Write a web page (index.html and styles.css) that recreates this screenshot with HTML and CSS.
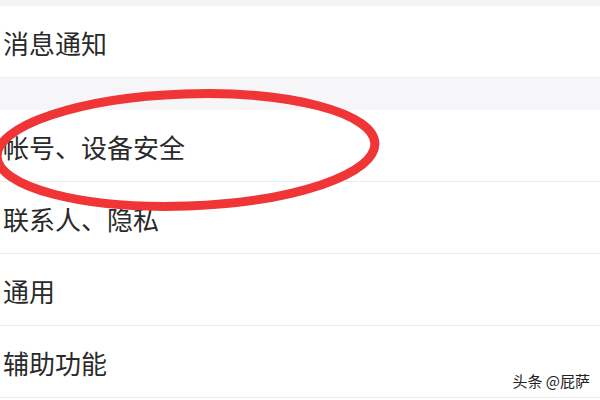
FILE: index.html
```html
<!DOCTYPE html>
<html>
<head>
    <title>设置</title>
    <meta name="viewport" content="width=device-width, initial-scale=1">
    <link rel="stylesheet" href="styles.css">
</head>
<body>
    <div class="screen">
        <div class="top-strip"></div>
        <div class="group">
            <div class="row row-first">消息通知</div>
        </div>
        <div class="gap"></div>
        <div class="group">
            <div class="row">帐号、设备安全</div>
            <div class="row">联系人、隐私</div>
            <div class="row">通用</div>
            <div class="row">辅助功能</div>
        </div>

        <!-- red circle drawn over the screenshot -->
        <svg class="mark" width="600" height="400" viewBox="0 0 600 400">
            <ellipse cx="186" cy="150" rx="189" ry="56" fill="none" stroke="#f03536" stroke-width="9" transform="rotate(-2 186 150)"/>
        </svg>

        <div class="watermark">头条 @屁萨</div>
    </div>
</body>
</html>
```

FILE: styles.css
```css
body {
    margin: 0;
    padding: 0;
    background-color: #ffffff;
    font-family: "Noto Sans CJK SC", "Noto Sans", sans-serif;
}

.screen {
    position: relative;
    width: 600px;
    height: 400px;
    overflow: hidden;
    display: flex;
    flex-direction: column;
    background-color: #ffffff;
}

.top-strip {
    height: 6px;
    background-color: #f4f4f6;
}

.gap {
    height: 32px;
    background-color: #f6f6f8;
    border-top: 1px solid #ececee;
}

.group {
    display: flex;
    flex-direction: column;
}

.row {
    height: 72px;
    display: flex;
    align-items: center;
    padding-left: 3px;
    padding-top: 2px;
    box-sizing: border-box;
    font-size: 26px;
    color: #2a2a2a;
    border-bottom: 1px solid #ececee;
    background-color: #ffffff;
}

.row-first {
    height: 71px;
    border-bottom: none;
}

.mark {
    position: absolute;
    left: 0;
    top: 0;
}

.watermark {
    position: absolute;
    right: 10px;
    bottom: 9px;
    font-size: 15px;
    color: #222222;
    text-shadow: 0 0 2px #ffffff;
}
```
